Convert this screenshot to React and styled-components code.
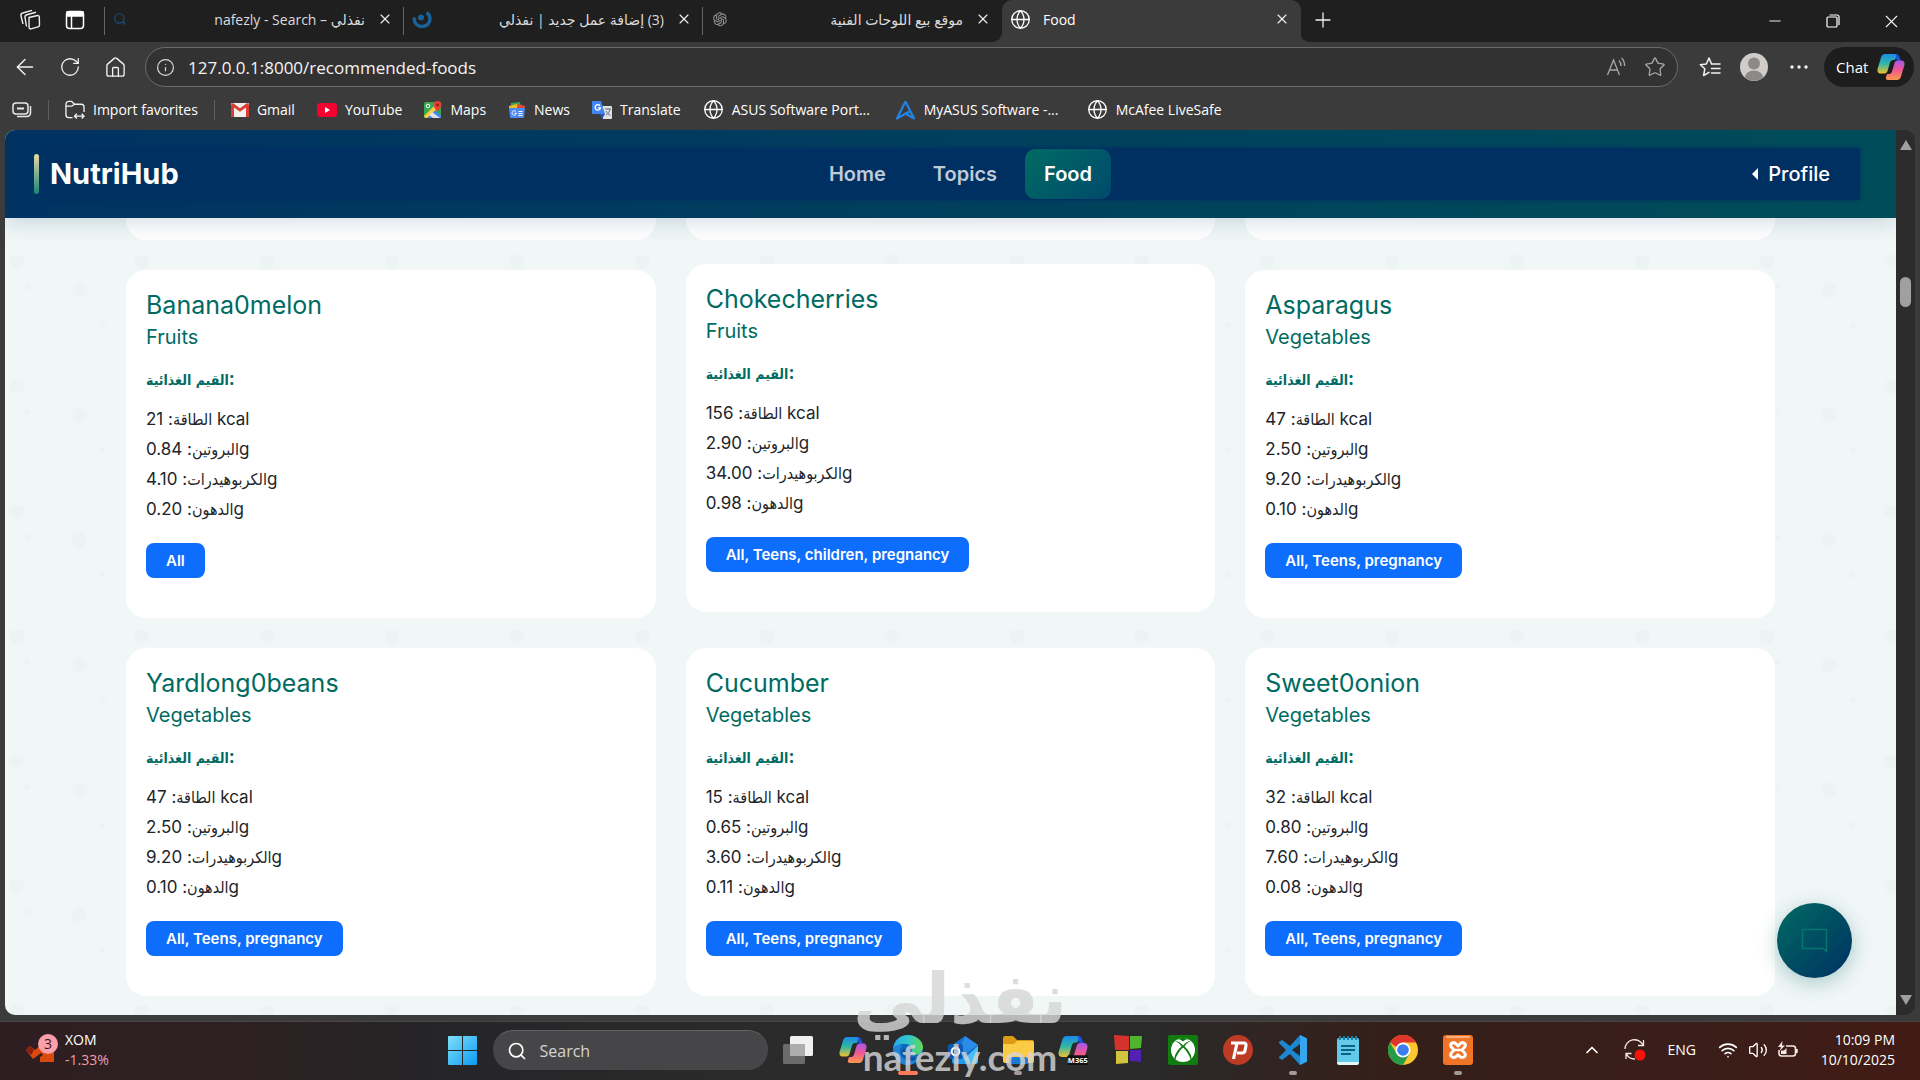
import React from 'react';
import styled, { createGlobalStyle, css } from 'styled-components';
import {
  ArrowLeft, RotateCw, House, Info, Star, X, Plus, Minus, Globe, Search,
  ChevronUp, Wifi, Volume2,
} from 'lucide-react';
import { AiOutlineOpenAI } from 'react-icons/ai';

const uiFont = '"Open Sans", "Noto Sans", "DejaVu Sans", sans-serif';
const siteFont = 'Inter, "Liberation Sans", "DejaVu Sans", sans-serif';

const GlobalStyle = createGlobalStyle`
  * {
    box-sizing: border-box;
  }

  body {
    margin: 0;
    background: #3b3b3b;
    overflow: hidden;
  }

  button, input {
    font: inherit;
    color: inherit;
    border: 0;
    padding: 0;
    background: none;
  }

  a {
    color: inherit;
    text-decoration: none;
  }

  h2, h3, h4, p, ul {
    margin: 0;
    padding: 0;
    font-weight: inherit;
  }

  svg {
    display: block;
    flex: none;
  }
`;

const Desktop = styled.div`
  height: 100vh;
  display: flex;
  flex-direction: column;
  background: #3b3b3b;
  color: #fff;
  font-family: ${uiFont};
`;

const IconButton = styled.button`
  width: ${(props) => props.$width || 47}px;
  height: 40px;
  flex: none;
  display: flex;
  align-items: center;
  justify-content: center;
  color: ${(props) => props.$color || '#f2f2f2'};
`;

/* ---------- tab strip ---------- */

const TabStrip = styled.div`
  height: 42px;
  flex: none;
  display: flex;
  background: #1f1f1f;
`;

const TabTools = styled.div`
  width: 105px;
  flex: none;
  display: flex;
  align-items: center;
  padding: 0 0 2px 7px;
  border-right: 1px solid #5c5c5c;
  border-image: linear-gradient(transparent 8px, #666 8px, #666 34px, transparent 34px) 1;
`;

const TabItem = styled.div`
  position: relative;
  width: 299px;
  display: flex;
  align-items: center;
  gap: 12px;
  padding: 0 10px 4px 8px;
  font-size: 14px;
  color: #dcdcdc;
  border-right: 1px solid transparent;
  ${(props) => props.$divider && css`
    border-image: linear-gradient(transparent 8px, #666 8px, #666 34px, transparent 34px) 1;
  `}
  ${(props) => props.$active && css`
    background: #3b3b3b;
    color: #fff;
    border-radius: 10px 10px 0 0;

    &::before, &::after {
      content: '';
      position: absolute;
      bottom: 0;
      width: 10px;
      height: 10px;
    }

    &::before {
      right: 100%;
      background: radial-gradient(circle at 0 0, transparent 10px, #3b3b3b 10px);
    }

    &::after {
      left: 100%;
      background: radial-gradient(circle at 100% 0, transparent 10px, #3b3b3b 10px);
    }
  `}
`;

const TabTitle = styled.span`
  flex: 1;
  min-width: 0;
  overflow: hidden;
  white-space: nowrap;
  text-align: ${(props) => props.$align || 'right'};
`;

const TabClose = styled.button`
  display: flex;
  color: #f2f2f2;
`;

const WindowControls = styled.div`
  margin-left: auto;
  display: flex;
  align-items: center;
`;

/* ---------- toolbar ---------- */

const Toolbar = styled.div`
  height: 52px;
  flex: none;
  display: flex;
  align-items: center;
  padding: 0 6px 2px 2px;
`;

const AddressBar = styled.label`
  flex: 1;
  height: 40px;
  display: flex;
  align-items: center;
  gap: 13px;
  margin: 0 10px 0 7px;
  padding: 0 9px 0 10px;
  border: 1px solid #6b6b6b;
  border-radius: 20px;
  background: #323232;
  color: #d8d8d8;
`;

const AddressInput = styled.input`
  flex: 1;
  min-width: 0;
  font-size: 17px;
  outline: none;
  color: #f4f4f4;
`;

const ChatButton = styled.button`
  height: 40px;
  width: 90px;
  flex: none;
  display: flex;
  align-items: center;
  justify-content: space-between;
  padding: 0 9px 0 12px;
  margin-left: 3px;
  border-radius: 20px;
  background: #1d1d1d;
  font-size: 15px;
`;

const FavoritesBar = styled.nav`
  height: 36px;
  flex: none;
  display: flex;
  align-items: center;
  gap: 22px;
  padding: 0 12px 5px;
  font-size: 14px;
  white-space: nowrap;
`;

const Favorite = styled.a`
  display: flex;
  align-items: center;
  gap: 8px;
  min-width: ${(props) => (props.$wide ? 170 : 0)}px;
`;

const BarDivider = styled.span`
  width: 1px;
  height: 20px;
  background: #5e5e5e;
  margin: 0 -6px;
`;

/* ---------- web page ---------- */

const Viewport = styled.div`
  flex: 1;
  min-height: 0;
  display: flex;
  margin: 0 5px 6px;
`;

const Page = styled.div`
  position: relative;
  flex: 1;
  min-width: 0;
  overflow: hidden;
  border-radius: 10px 0 0 10px;
  font-family: ${siteFont};
  color: #212529;
  background-color: #f0f7f6;
  background-image:
    radial-gradient(circle at 74px 35px, rgba(0, 96, 100, .02) 5px, transparent 9px),
    radial-gradient(circle at 22px 32px, rgba(0, 96, 100, .02) 1px, transparent 4px),
    radial-gradient(circle at 98px 70px, rgba(0, 96, 100, .02) 1px, transparent 4px),
    radial-gradient(circle at 12px 6px, rgba(0, 96, 100, .02) 5px, transparent 9px);
  background-size: 125px 125px;
`;

const SiteHeader = styled.header`
  position: relative;
  z-index: 1;
  height: 88px;
  display: flex;
  align-items: center;
  padding: 0 36px;
  background: linear-gradient(135deg, #003262, #004d59);
  box-shadow: 0 5px 20px rgba(0, 48, 98, .16);
`;

const SiteNav = styled.nav`
  flex: 1;
  height: 52px;
  display: flex;
  justify-content: space-between;
  align-items: center;
  background: #003062;
  box-shadow: 0 0 4px #003062;
`;

const Brand = styled.a`
  position: relative;
  padding-left: 9px;
  font-size: 29px;
  line-height: 40px;
  font-weight: 700;
  color: #fff;

  &::before {
    content: '';
    position: absolute;
    left: -7px;
    top: 0;
    width: 5px;
    height: 40px;
    border-radius: 3px;
    background: linear-gradient(#e5dba8, #178577);
  }
`;

const NavLinks = styled.div`
  display: flex;
  gap: 9px;
`;

const NavLink = styled.a`
  padding: 0 19px;
  line-height: 50px;
  border-radius: 10px;
  font-size: 20px;
  font-weight: 600;
  color: ${(props) => (props.$active ? '#fff' : '#bfcbd8')};
  background: ${(props) => (props.$active ? 'linear-gradient(135deg, #006b62, #004a6c)' : 'none')};
`;

const ProfileButton = styled.button`
  display: flex;
  align-items: center;
  gap: 10px;
  padding: 0 30px 0 10px;
  font-size: 20px;
  font-weight: 500;
  color: #fff;
`;

const Caret = styled.span`
  border: 6px solid transparent;
  border-right-color: #fff;
  border-left: 0;
`;

const FoodGrid = styled.main`
  display: grid;
  grid-template-columns: repeat(3, 1fr);
  gap: 30px;
  width: 100%;
  padding: 0 121px;
`;

const CardTail = styled.div`
  height: 22px;
  border-radius: 0 0 20px 20px;
  background: #fff;
`;

const Card = styled.article`
  padding: 20px 20px 40px;
  border-radius: 20px;
  background: #fff;
  transform: ${(props) => (props.$raised ? 'translateY(-6px)' : 'none')};
`;

const FoodName = styled.h2`
  font-size: 25px;
  line-height: 30px;
  font-weight: 400;
  color: #006b62;
`;

const FoodKind = styled.h3`
  margin-top: 5px;
  font-size: 20px;
  line-height: 24px;
  font-weight: 400;
  color: #006b62;
`;

const FactsTitle = styled.h4`
  margin-top: 18px;
  font-size: 18px;
  line-height: 24px;
  font-weight: 700;
  color: #006b62;
`;

const Facts = styled.ul`
  margin-top: 13px;
  list-style: none;
  font-size: 17px;
  line-height: 30px;
`;

const Arabic = styled.span`
  font-family: "DejaVu Sans Condensed", "DejaVu Sans", sans-serif;
  font-size: ${(props) => (props.$bold ? 14 : 16)}px;
  line-height: 1;
`;

const Audience = styled.button`
  display: block;
  height: 35px;
  margin-top: 19px;
  padding: 0 20px;
  border-radius: 8px;
  background: #0d6efd;
  color: #fff;
  font-size: 15px;
  font-weight: 600;
`;

const ChatBubble = styled.button`
  position: absolute;
  right: 44px;
  bottom: 37px;
  width: 75px;
  height: 75px;
  display: flex;
  align-items: center;
  justify-content: center;
  border-radius: 50%;
  background: linear-gradient(135deg, #006b62, #003062);
  box-shadow: 0 5px 20px rgba(0, 96, 100, .3);
`;

const ScrollTrack = styled.div`
  width: 19px;
  flex: none;
  display: flex;
  flex-direction: column;
  align-items: center;
  padding: 10px 0;
  border-radius: 0 10px 10px 0;
  background: #2c2c2c;
`;

const ScrollArrow = styled.span`
  border: 6px solid transparent;
  ${(props) => (props.$up
    ? 'border-top: 0; border-bottom: 10px solid #a0a0a0;'
    : 'border-bottom: 0; border-top: 10px solid #a0a0a0; margin-top: auto;')}
`;

const ScrollThumb = styled.span`
  width: 11px;
  height: 30px;
  margin-top: 127px;
  border-radius: 6px;
  background: #a0a0a0;
`;

/* ---------- taskbar ---------- */

const Taskbar = styled.footer`
  height: 59px;
  flex: none;
  display: grid;
  grid-template-columns: 1fr auto 1fr;
  align-items: center;
  padding-bottom: 2px;
  border-top: 1px solid #4a4545;
  background: linear-gradient(90deg, #2e1e22, #2e2020 11%, #252427 22%, #2b2b2b 40%, #2a2a2a 60%, #351f19 72%, #3a1e19 88%, #421b15);
`;

const StockWidget = styled.button`
  justify-self: start;
  display: flex;
  align-items: center;
  gap: 7px;
  padding-left: 25px;
  text-align: left;
  font-size: 14px;
  line-height: 20px;
`;

const StockChange = styled.span`
  display: block;
  color: #f19cab;
`;

const AppRow = styled.div`
  display: flex;
  align-items: center;
`;

const AppButton = styled.button`
  position: relative;
  width: 55px;
  height: 50px;
  display: flex;
  align-items: center;
  justify-content: center;

  &::after {
    content: '';
    position: absolute;
    bottom: 0;
    width: ${(props) => (props.$state === 'active' ? 20 : 8)}px;
    height: 4px;
    border-radius: 2px;
    background: ${(props) => (props.$state === 'active' ? '#ff7a59' : '#a39a98')};
    display: ${(props) => (props.$state ? 'block' : 'none')};
  }
`;

const SearchBox = styled.label`
  width: 275px;
  height: 40px;
  margin: 0 3px;
  display: flex;
  align-items: center;
  gap: 13px;
  padding: 0 14px;
  border-radius: 20px;
  border-top: 1px solid #626264;
  background: #464648;
  color: #fff;

  input {
    flex: 1;
    min-width: 0;
    font-size: 16px;
    outline: none;
  }

  input::placeholder {
    color: #d5d5d5;
    opacity: 1;
  }
`;

const Tray = styled.div`
  justify-self: end;
  display: flex;
  align-items: center;
  padding-right: 25px;
  font-size: 14px;
  line-height: 20px;
`;

const TrayButton = styled.button`
  display: flex;
  align-items: center;
  gap: 10px;
  margin-right: ${(props) => props.$after || 22}px;
`;

const Clock = styled.div`
  width: 96px;
  text-align: right;
`;

const Watermark = styled.div`
  position: absolute;
  left: 50%;
  bottom: 5px;
  transform: translateX(-50%);
  display: flex;
  flex-direction: column;
  align-items: center;
  pointer-events: none;
  color: rgba(214, 214, 214, .82);
  white-space: nowrap;
`;

const WatermarkArabic = styled.span`
  font-family: "DejaVu Sans", sans-serif;
  font-weight: 700;
  font-size: 70px;
  line-height: 80px;
`;

const WatermarkLatin = styled.span`
  font-family: Lato, sans-serif;
  font-weight: 700;
  font-size: 37px;
  line-height: 36px;
`;

/* ---------- icons ---------- */

const WorkspacesIcon = () => (
  <svg width="22" height="22" viewBox="0 0 22 22" fill="none" stroke="#eee" strokeWidth="1.4" strokeLinejoin="round">
    <path d="M10 8.5l8.5-2a1.5 1.5 0 011.8 1.4l.2 8a2 2 0 01-1.5 2l-7 2a1.5 1.5 0 01-1.9-1.4z" />
    <path d="M7.500 17.500l-1.500-9a2.500 2.500 0 011.900-2.800l9-2.400" />
    <path d="M4 15L2 7a2.500 2.500 0 011.800-3L13 1.300" />
  </svg>
);

const VerticalTabsIcon = () => (
  <svg width="20" height="20" viewBox="0 0 20 20" fill="none" stroke="#fff" strokeWidth="1.5">
    <rect x="1.500" y="1.500" width="17" height="17" rx="3" />
    <path d="M2 2h16v4H2z" fill="#fff" />
    <path d="M6.500 6v12" />
  </svg>
);

const NafezlyIcon = () => (
  <svg width="20" height="20" viewBox="0 0 20 20" fill="none" stroke="#17629b">
    <path d="M2.500 8.500a7.500 7.500 0 0010 8.500 7.500 7.500 0 002-13.500" strokeWidth="3.400" />
    <circle cx="9" cy="8.500" r="3" fill="#17629b" stroke="none" />
  </svg>
);

const RestoreIcon = () => (
  <svg width="14" height="14" viewBox="0 0 14 14" fill="none" stroke="#fff" strokeWidth="1.200">
    <rect x="1" y="3" width="10" height="10" rx="1" />
    <path d="M3.500 1H11a2 2 0 012 2v8" />
  </svg>
);

const ReadAloudIcon = () => (
  <svg width="20" height="20" viewBox="0 0 20 20" fill="none" stroke="#a8a8a8" strokeWidth="1.300">
    <path d="M1.500 18L7.500 3l6 15M3.500 13h8" />
    <path d="M13 3.500a7 7 0 012 5.500M15.500 1a10 10 0 013 8" />
  </svg>
);

const FavoritesIcon = () => (
  <svg width="22" height="22" viewBox="0 0 22 22" fill="none" stroke="#f2f2f2" strokeWidth="1.500" strokeLinejoin="round" strokeLinecap="round">
    <path d="M12.500 8L10 2 7.300 8 1.300 8.700l4.500 4.100L4.600 19.500 10 16.300" />
    <path d="M13 8h8M12.500 12.500H21M12.500 17H21" />
  </svg>
);

const MoreIcon = () => (
  <svg width="18" height="4" viewBox="0 0 18 4" fill="#f2f2f2">
    <circle cx="2" cy="2" r="1.700" />
    <circle cx="9" cy="2" r="1.700" />
    <circle cx="16" cy="2" r="1.700" />
  </svg>
);

const AvatarIcon = () => (
  <svg width="28" height="28" viewBox="0 0 28 28">
    <circle cx="14" cy="14" r="14" fill="#cfccc9" />
    <circle cx="14" cy="10.500" r="6" fill="#8c8986" />
    <path d="M5 24.500a9 7 0 0118 0A14 14 0 015 24.500z" fill="#8c8986" />
  </svg>
);

const CopilotIcon = ({ size, badge }) => (
  <svg width={size} height={size} viewBox="0 0 28 28">
    <defs>
      <linearGradient id="copilotA" x1="0" y1="0" x2="0" y2="1">
        <stop offset="0" stopColor="#1a8be8" />
        <stop offset=".5" stopColor="#2fb8a4" />
        <stop offset="1" stopColor="#f2c12e" />
      </linearGradient>
      <linearGradient id="copilotB" x1="0" y1="0" x2="0" y2="1">
        <stop offset="0" stopColor="#a855e8" />
        <stop offset=".5" stopColor="#f0588f" />
        <stop offset="1" stopColor="#ff9a4a" />
      </linearGradient>
    </defs>
    <path d="M19 6l-1-3a3 3 0 00-3-2h4a3 3 0 013 2l2 5h-3z" fill="#1c53d8" />
    <path d="M8 1h9c2 0 2.500 1.500 2 3l-1 3h-2c-1.500 0-2.500 1-3 2.500L10.500 18c-.5 1.500-1.500 2.500-3 2.500H4c-3 0-4-2-3.300-5L4 4.500C4.600 2.300 6 1 8 1z" fill="url(#copilotA)" />
    <path d="M20 27h-9c-2 0-2.500-1.500-2-3l1-3h2c1.500 0 2.500-1 3-2.500L17.500 10c.5-1.500 1.500-2.500 3-2.500H24c3 0 4 2 3.300 5L24 23.500c-.6 2.200-2 3.500-4 3.500z" fill="url(#copilotB)" />
    {badge && (
      <>
        <rect x="9" y="19" width="19" height="9" rx="1" fill="#111" />
        <text x="18.500" y="26" fill="#fff" fontSize="7" fontWeight="700" textAnchor="middle">M365</text>
      </>
    )}
  </svg>
);

const PanelIcon = () => (
  <svg width="20" height="16" viewBox="0 0 20 16" fill="none" stroke="#e8e8e8" strokeWidth="1.500">
    <rect x="1" y="1" width="15" height="11" rx="3" />
    <path d="M5 6.500h7" strokeWidth="2" />
    <path d="M18.500 4v7a3.500 3.500 0 01-3.500 3.500H5" />
  </svg>
);

const ImportIcon = () => (
  <svg width="20" height="20" viewBox="0 0 21 20" fill="none" stroke="#f2f2f2" strokeWidth="1.400" strokeLinejoin="round">
    <path d="M8 18H4a3 3 0 01-3-3V4a3 3 0 013-3h3l3 3h7a3 3 0 013 3v5" />
    <path d="M1 6h6l3-2M10 16.500h10M12.500 14L10 16.500l2.500 2.500M17.500 14l2.500 2.500-2.500 2.500" />
  </svg>
);

const GmailIcon = () => (
  <svg width="18" height="14" viewBox="0 0 18 16" preserveAspectRatio="none">
    <rect width="18" height="16" rx="1.500" fill="#f3f0ee" />
    <path d="M0 2v14h3V5l6 5 6-5v11h3V2l-2-2-7 6-7-6z" fill="#d93f33" />
  </svg>
);

const YouTubeIcon = () => (
  <svg width="20" height="14" viewBox="0 0 20 14">
    <rect width="20" height="14" rx="3.500" fill="#f40331" />
    <path d="M8 4l5 3-5 3z" fill="#fff" />
  </svg>
);

const MapsIcon = () => (
  <svg width="18" height="18" viewBox="0 0 18 18">
    <rect y="1" width="17" height="16" rx="2" fill="#36a852" />
    <path d="M1 17L10 8l7 7v2z" fill="#4285f4" />
    <path d="M0 15L12 3l3 3L3 17H1z" fill="#f7cf3b" />
    <path d="M8 11l8 6h-7l-4-3z" fill="#dfe3e6" />
    <path d="M13.500 0a4 4 0 014 4c0 3-3 4-4 8-1-4-4-5-4-8a4 4 0 014-4z" fill="#e34434" />
    <circle cx="13.500" cy="4" r="1.400" fill="#8c1d16" />
    <circle cx="4" cy="5" r="1.800" fill="none" stroke="#fff" />
  </svg>
);

const NewsIcon = () => (
  <svg width="18" height="16" viewBox="0 0 18 16">
    <path d="M3 1l9-1 1 6H3z" fill="#35a853" />
    <path d="M1 4l8-2v5H1z" fill="#f4b92b" />
    <path d="M10 2l7 2-1 4h-6z" fill="#e2493b" />
    <path d="M1 6h16l-1 9a1 1 0 01-1 1H3a1 1 0 01-1-1z" fill="#4a8af4" />
    <path d="M8 9.500a2.200 2.200 0 10.500 1.700H6.500M10.500 9.500h4M10.500 11.500h4M10.500 13.500h4" stroke="#fff" fill="none" />
  </svg>
);

const TranslateIcon = () => (
  <svg width="20" height="18" viewBox="0 0 20 18">
    <path d="M8 5h11a1 1 0 011 1v11a1 1 0 01-1 1h-8z" fill="#dfe1e5" />
    <path d="M1 0h8l4 13H1a1 1 0 01-1-1V1a1 1 0 011-1z" fill="#4384f3" />
    <path d="M8 13h5l-3 5z" fill="#2454b8" />
    <path d="M8 4.800a2.700 2.700 0 10.500 2H5.800" stroke="#fff" strokeWidth="1.300" fill="none" />
    <path d="M13 8h6M16 7v1M18 8c-.5 3-2 5-4 6M14 10c1 2 2.500 3.500 4.500 4.500" stroke="#6a737d" fill="none" />
  </svg>
);

const MyAsusIcon = () => (
  <svg width="21" height="20" viewBox="0 0 21 20" fill="none" stroke="#2283e2" strokeWidth="2.200" strokeLinejoin="round">
    <path d="M10.500 1.500L2 18.500l12.500-7M10.500 1.500L19 18.500 9.500 13" />
  </svg>
);

const BubbleIcon = () => (
  <svg width="27" height="25" viewBox="0 0 27 25" fill="none" stroke="#04756f" strokeWidth="1.500">
    <path d="M1.500 1.500h24v22l-3-3h-21z" />
  </svg>
);

const StockIcon = () => (
  <svg width="33" height="32" viewBox="0 0 33 32">
    <path d="M1 16l4-4 5 4 6-5 13 4v13H15v-5l3-2-2-2-8 6z" fill="#d94a0c" />
    <path d="M1 16l4-4 4 4-3 5z" fill="#8f1d12" />
    <circle cx="23" cy="10" r="10" fill="#fba0ab" />
    <text x="23" y="15" fill="#3b1518" fontSize="14" textAnchor="middle">3</text>
  </svg>
);

const StartIcon = () => (
  <svg width="29" height="29" viewBox="0 0 29 29">
    <defs>
      <linearGradient id="start" x1="0" y1="0" x2="1" y2="1">
        <stop offset="0" stopColor="#7fe0fb" />
        <stop offset="1" stopColor="#0c9bf0" />
      </linearGradient>
    </defs>
    <path d="M0 1a1 1 0 011-1h13v14H0zM15 0h13a1 1 0 011 1v13H15zM0 15h14v14H1a1 1 0 01-1-1zM15 15h14v13a1 1 0 01-1 1H15z" fill="url(#start)" />
  </svg>
);

const TaskViewIcon = () => (
  <svg width="30" height="28" viewBox="0 0 30 28">
    <rect x="7" y="0" width="23" height="20" rx="1.500" fill="#f0f0f0" />
    <rect x="0" y="8" width="22" height="20" rx="1.500" fill="#777" fillOpacity=".85" />
    <path d="M7 8h15v12H7z" fill="#adadad" />
  </svg>
);

const EdgeIcon = () => (
  <svg width="30" height="30" viewBox="0 0 30 30">
    <defs>
      <linearGradient id="edgeTop" x1="0" y1="0" x2="1" y2="0">
        <stop offset="0" stopColor="#2aa5e6" />
        <stop offset=".5" stopColor="#2fc7c9" />
        <stop offset="1" stopColor="#62d654" />
      </linearGradient>
    </defs>
    <circle cx="15" cy="15" r="15" fill="#1065b8" />
    <path d="M0 14C1 5 7 0 15 0s15 6 15 12c0 5-4 8-8 8-3 0-5-1-4-3 2-3 0-8-6-8C6 9 2 11 0 14z" fill="url(#edgeTop)" />
    <path d="M10 10c-4 3-4 8-1 12 3 4 10 6 17 2-4 5-9 6-13 6C6 29 1 24 0 16c0-5 5-7 10-6z" fill="#1b84d8" />
    <path d="M12 13c-2 5 3 11 12 10-5 3-11 2-14-2-2-3-1-6 2-8z" fill="#0c4b93" />
  </svg>
);

const OutlookIcon = () => (
  <svg width="31" height="30" viewBox="0 0 31 30">
    <path d="M4 10L17 1l13 9v16a3 3 0 01-3 3H7a3 3 0 01-3-3z" fill="#1570cf" />
    <path d="M17 1l13 9-13 9-5-5z" fill="#2a8ce4" />
    <path d="M30 11v15a3 3 0 01-3 3H10z" fill="#49bff5" />
    <path d="M4 12l20 17H7a3 3 0 01-3-3z" fill="#1e9ae9" />
    <rect x="0" y="9" width="15" height="15" rx="2.500" fill="#0f59b5" />
    <circle cx="7.500" cy="16.500" r="3.800" fill="none" stroke="#fff" strokeWidth="2" />
  </svg>
);

const FolderIcon = () => (
  <svg width="31" height="28" viewBox="0 0 31 28">
    <path d="M0 2a2 2 0 012-2h8l4 4h15a2 2 0 012 2v4H0z" fill="#dd9a14" />
    <path d="M0 8h11l3-3h15a2 2 0 012 2v18a2 2 0 01-2 2H2a2 2 0 01-2-2z" fill="#fccb45" />
    <path d="M6 28v-4a3 3 0 013-3h13a3 3 0 013 3v4z" fill="#1c78d2" />
  </svg>
);

const SquaresIcon = () => (
  <svg width="28" height="30" viewBox="0 0 28 30">
    <path d="M0 0l15 1v14H1z" fill="#d6322d" />
    <path d="M16 1h12l-1 12-11 1z" fill="#4fb52e" />
    <path d="M2 16h12v12l-12 1z" fill="#d3c43d" />
    <path d="M16 15h11v12l-11-1z" fill="#5320b4" />
  </svg>
);

const XboxIcon = () => (
  <svg width="30" height="30" viewBox="0 0 30 30">
    <rect width="30" height="30" rx="2" fill="#107c10" />
    <circle cx="15" cy="15" r="12" fill="#fff" />
    <path d="M7 6c3 0 6 2 8 4.500C17 8 20 6 23 6c-3 1-5 3-6.500 5.500 3.500 3 7 8 7 12l-1 1c-1-4-4-9-7.500-12-3.500 3-6.500 8-7.500 12l-1-1c0-4 3.500-9 7-12C12 9 10 7 7 6z" fill="#107c10" />
    <path d="M9 4.500c2-.5 4 .5 6 2 2-1.500 4-2.500 6-2-3-2-9-2-12 0z" fill="#107c10" />
  </svg>
);

const PictoIcon = () => (
  <svg width="30" height="30" viewBox="0 0 30 30">
    <circle cx="15" cy="15" r="15" fill="#bd3a24" />
    <path d="M8 8h13a2 2 0 012 2.500l-1 5a3 3 0 01-3 2.500h-5M14 8l-3.500 16" fill="none" stroke="#fff" strokeWidth="3.200" />
  </svg>
);

const CodeIcon = () => (
  <svg width="30" height="30" viewBox="0 0 30 30">
    <path d="M22 0l7 3.500v23L22 30 12 19l-8 6-3-2v-1l7-7-7-7V7l3-2 8 6z" fill="#1c86cf" />
    <path d="M22 0l7 3.500v23L22 30z" fill="#35a6ee" />
    <path d="M22 9v12l-8-6z" fill="#2a2424" />
  </svg>
);

const NotepadIcon = () => (
  <svg width="24" height="30" viewBox="0 0 24 30">
    <rect x="1" y="3" width="22" height="26" rx="2" fill="#63cbea" />
    <path d="M1 27h22v1a2 2 0 01-2 2H3a2 2 0 01-2-2z" fill="#e6f5fa" />
    <path d="M4 1v4M8 1v4M12 1v4M16 1v4M20 1v4" stroke="#1680a8" strokeWidth="2" />
    <path d="M5 11h14M5 15h14M5 19h10" stroke="#0f5f83" strokeWidth="2" />
  </svg>
);

const ChromeIcon = () => (
  <svg width="30" height="30" viewBox="0 0 30 30">
    <circle cx="15" cy="15" r="15" fill="#fbc72e" />
    <path d="M2 7.500A15 15 0 002 22.500 15 15 0 0015 30l6.500-11.500L15 15 8.500 18.500z" fill="#279b48" />
    <path d="M2 7.500A15 15 0 0128 7.500H15l-6 5z" fill="#e0352b" />
    <circle cx="15" cy="15" r="7.500" fill="#fff" />
    <circle cx="15" cy="15" r="5.800" fill="#3b7ded" />
  </svg>
);

const XamppIcon = () => (
  <svg width="30" height="30" viewBox="0 0 30 30">
    <rect width="30" height="30" rx="3" fill="#ef7427" />
    <rect x="3" y="1" width="24" height="2" rx="1" fill="#f9b184" />
    <path d="M9 8c4-2 5 3 6 3s2-5 6-3c4 3-2 6-2 7s6 4 2 7c-4 2-5-2-6-2s-2 4-6 2c-4-3 2-6 2-7s-6-4-2-7z" fill="none" stroke="#fff" strokeWidth="3" />
    <path d="M12 15h6" stroke="#fff" strokeWidth="2.500" />
  </svg>
);

const SyncIcon = () => (
  <svg width="22" height="22" viewBox="0 0 22 22" fill="none" stroke="#f4e9e6" strokeWidth="1.300">
    <path d="M1 10a9.500 9.500 0 0118-4M19.500 1v5.500H14M2 20v-5.500h5.500M2.500 15A9 9 0 0011 20" />
    <circle cx="16" cy="16" r="5.500" fill="#f8120c" stroke="none" />
  </svg>
);

const BatteryIcon = () => (
  <svg width="20" height="18" viewBox="0 0 20 18" fill="none" stroke="#f4e9e6" strokeWidth="1.600">
    <path d="M8 5h7a2.500 2.500 0 012.500 2.500v5A2.500 2.500 0 0115 15H3.500A2.500 2.500 0 011 12.500V9" />
    <path d="M18.500 8v4" strokeWidth="2.500" />
    <path d="M3 13V9.500h3L8.500 7v6z" fill="#f4e9e6" stroke="none" />
    <path d="M4.500 0L0 6h3L1.500 10 7 4.500H4z" fill="#f4e9e6" stroke="none" />
  </svg>
);

/* ---------- data ---------- */

const tabs = [
  { title: 'nafezly - Search – نفذلي', icon: <Search size={14} color="#155082" />, divider: true },
  { title: '(3) إضافة عمل جديد | نفذلي', icon: <NafezlyIcon />, dir: 'rtl', align: 'start', divider: true },
  { title: 'موقع بيع اللوحات الفنية', icon: <AiOutlineOpenAI size={18} color="#8d8d8d" />, dir: 'rtl', align: 'start' },
  { title: 'Food', icon: <Globe size={21} strokeWidth={1.5} />, align: 'left', active: true },
];

const favorites = [
  { title: 'Gmail', icon: <GmailIcon /> },
  { title: 'YouTube', icon: <YouTubeIcon /> },
  { title: 'Maps', icon: <MapsIcon /> },
  { title: 'News', icon: <NewsIcon /> },
  { title: 'Translate', icon: <TranslateIcon /> },
  { title: 'ASUS Software Port...', icon: <Globe size={21} strokeWidth={1.5} />, wide: true },
  { title: 'MyASUS Software -...', icon: <MyAsusIcon />, wide: true },
  { title: 'McAfee LiveSafe', icon: <Globe size={21} strokeWidth={1.5} /> },
];

const foods = [
  { name: 'Banana0melon', kind: 'Fruits', kcal: '21', protein: '0.84', carbs: '4.10', fat: '0.20', audience: 'All' },
  { name: 'Chokecherries', kind: 'Fruits', kcal: '156', protein: '2.90', carbs: '34.00', fat: '0.98', audience: 'All, Teens, children, pregnancy', raised: true },
  { name: 'Asparagus', kind: 'Vegetables', kcal: '47', protein: '2.50', carbs: '9.20', fat: '0.10', audience: 'All, Teens, pregnancy' },
  { name: 'Yardlong0beans', kind: 'Vegetables', kcal: '47', protein: '2.50', carbs: '9.20', fat: '0.10', audience: 'All, Teens, pregnancy' },
  { name: 'Cucumber', kind: 'Vegetables', kcal: '15', protein: '0.65', carbs: '3.60', fat: '0.11', audience: 'All, Teens, pregnancy' },
  { name: 'Sweet0onion', kind: 'Vegetables', kcal: '32', protein: '0.80', carbs: '7.60', fat: '0.08', audience: 'All, Teens, pregnancy' },
];

const apps = [
  { name: 'Task view', icon: <TaskViewIcon /> },
  { name: 'Copilot', icon: <CopilotIcon size={28} /> },
  { name: 'Edge', icon: <EdgeIcon />, state: 'active' },
  { name: 'Outlook', icon: <OutlookIcon /> },
  { name: 'File Explorer', icon: <FolderIcon />, state: 'open' },
  { name: 'Microsoft 365', icon: <CopilotIcon size={30} badge /> },
  { name: 'Squares', icon: <SquaresIcon /> },
  { name: 'Xbox', icon: <XboxIcon /> },
  { name: 'Picto', icon: <PictoIcon /> },
  { name: 'VS Code', icon: <CodeIcon />, state: 'open' },
  { name: 'Notepad', icon: <NotepadIcon /> },
  { name: 'Chrome', icon: <ChromeIcon /> },
  { name: 'XAMPP', icon: <XamppIcon />, state: 'open' },
];

/* ---------- components ---------- */

const FoodCard = ({ food }) => (
  <Card $raised={food.raised}>
    <FoodName>{food.name}</FoodName>
    <FoodKind>{food.kind}</FoodKind>
    <FactsTitle><Arabic $bold>القيم الغذائية</Arabic>:</FactsTitle>
    <Facts>
      <li><Arabic>الطاقة</Arabic>: {food.kcal} kcal</li>
      <li><Arabic>البروتين</Arabic>: {food.protein}g</li>
      <li><Arabic>الكربوهيدرات</Arabic>: {food.carbs}g</li>
      <li><Arabic>الدهون</Arabic>: {food.fat}g</li>
    </Facts>
    <Audience>{food.audience}</Audience>
  </Card>
);

const BrowserChrome = () => (
  <>
    <TabStrip>
      <TabTools>
        <IconButton $width={45} aria-label="Workspaces"><WorkspacesIcon /></IconButton>
        <IconButton $width={45} aria-label="Tab actions"><VerticalTabsIcon /></IconButton>
      </TabTools>
      {tabs.map((tab) => (
        <TabItem key={tab.title} $active={tab.active} $divider={tab.divider}>
          {tab.icon}
          <TabTitle dir={tab.dir} $align={tab.align}>{tab.title}</TabTitle>
          <TabClose aria-label="Close tab"><X size={16} strokeWidth={1.7} /></TabClose>
        </TabItem>
      ))}
      <IconButton $width={44} aria-label="New tab"><Plus size={24} strokeWidth={1.3} /></IconButton>
      <WindowControls>
        <IconButton $width={58} aria-label="Minimize"><Minus size={18} strokeWidth={1.3} /></IconButton>
        <IconButton $width={58} aria-label="Restore"><RestoreIcon /></IconButton>
        <IconButton $width={58} aria-label="Close"><X size={21} strokeWidth={1.3} /></IconButton>
      </WindowControls>
    </TabStrip>
    <Toolbar>
      <IconButton $width={46} aria-label="Back"><ArrowLeft size={26} strokeWidth={1.3} /></IconButton>
      <IconButton $width={44} aria-label="Refresh"><RotateCw size={22} strokeWidth={1.4} /></IconButton>
      <IconButton $width={46} aria-label="Home"><House size={23} strokeWidth={1.4} /></IconButton>
      <AddressBar>
        <Info size={19} strokeWidth={1.5} />
        <AddressInput aria-label="Address" defaultValue="127.0.0.1:8000/recommended-foods" />
        <IconButton $width={26} aria-label="Read aloud"><ReadAloudIcon /></IconButton>
        <IconButton $width={26} $color="#a8a8a8" aria-label="Add to favorites"><Star size={22} strokeWidth={1.4} /></IconButton>
      </AddressBar>
      <IconButton $width={43} aria-label="Favorites"><FavoritesIcon /></IconButton>
      <IconButton $width={46} aria-label="Account"><AvatarIcon /></IconButton>
      <IconButton $width={44} aria-label="Settings"><MoreIcon /></IconButton>
      <ChatButton>Chat<CopilotIcon size={28} /></ChatButton>
    </Toolbar>
    <FavoritesBar>
      <Favorite href="#" aria-label="Panel"><PanelIcon /></Favorite>
      <BarDivider />
      <Favorite href="#"><ImportIcon />Import favorites</Favorite>
      <BarDivider />
      {favorites.map((item) => (
        <Favorite key={item.title} href="#" $wide={item.wide}>{item.icon}{item.title}</Favorite>
      ))}
    </FavoritesBar>
  </>
);

const FoodPage = () => (
  <Page>
    <SiteHeader>
      <SiteNav>
        <Brand href="#">NutriHub</Brand>
        <NavLinks>
          <NavLink href="#">Home</NavLink>
          <NavLink href="#">Topics</NavLink>
          <NavLink href="#" $active>Food</NavLink>
        </NavLinks>
        <ProfileButton><Caret />Profile</ProfileButton>
      </SiteNav>
    </SiteHeader>
    <FoodGrid>
      <CardTail />
      <CardTail />
      <CardTail />
      {foods.map((food) => <FoodCard key={food.name} food={food} />)}
    </FoodGrid>
    <ChatBubble aria-label="Open chat"><BubbleIcon /></ChatBubble>
  </Page>
);

const WindowsTaskbar = () => (
  <Taskbar>
    <StockWidget>
      <StockIcon />
      <span>XOM<StockChange>-1.33%</StockChange></span>
    </StockWidget>
    <AppRow>
      <AppButton aria-label="Start"><StartIcon /></AppButton>
      <SearchBox>
        <Search size={20} strokeWidth={2} />
        <input aria-label="Search" placeholder="Search" />
      </SearchBox>
      {apps.map((app) => (
        <AppButton key={app.name} aria-label={app.name} $state={app.state}>{app.icon}</AppButton>
      ))}
    </AppRow>
    <Tray>
      <TrayButton aria-label="Hidden icons"><ChevronUp size={20} /></TrayButton>
      <TrayButton aria-label="Updates"><SyncIcon /></TrayButton>
      <TrayButton>ENG</TrayButton>
      <TrayButton aria-label="Network, volume, battery" $after={1}>
        <Wifi size={20} />
        <Volume2 size={20} strokeWidth={1.6} />
        <BatteryIcon />
      </TrayButton>
      <Clock>10:09 PM<br />10/10/2025</Clock>
    </Tray>
  </Taskbar>
);

const App = () => (
  <Desktop>
    <GlobalStyle />
    <BrowserChrome />
    <Viewport>
      <FoodPage />
      <ScrollTrack>
        <ScrollArrow $up />
        <ScrollThumb />
        <ScrollArrow />
      </ScrollTrack>
    </Viewport>
    <WindowsTaskbar />
    <Watermark>
      <WatermarkArabic>نفذلي</WatermarkArabic>
      <WatermarkLatin>nafezly.com</WatermarkLatin>
    </Watermark>
  </Desktop>
);

export default App;
